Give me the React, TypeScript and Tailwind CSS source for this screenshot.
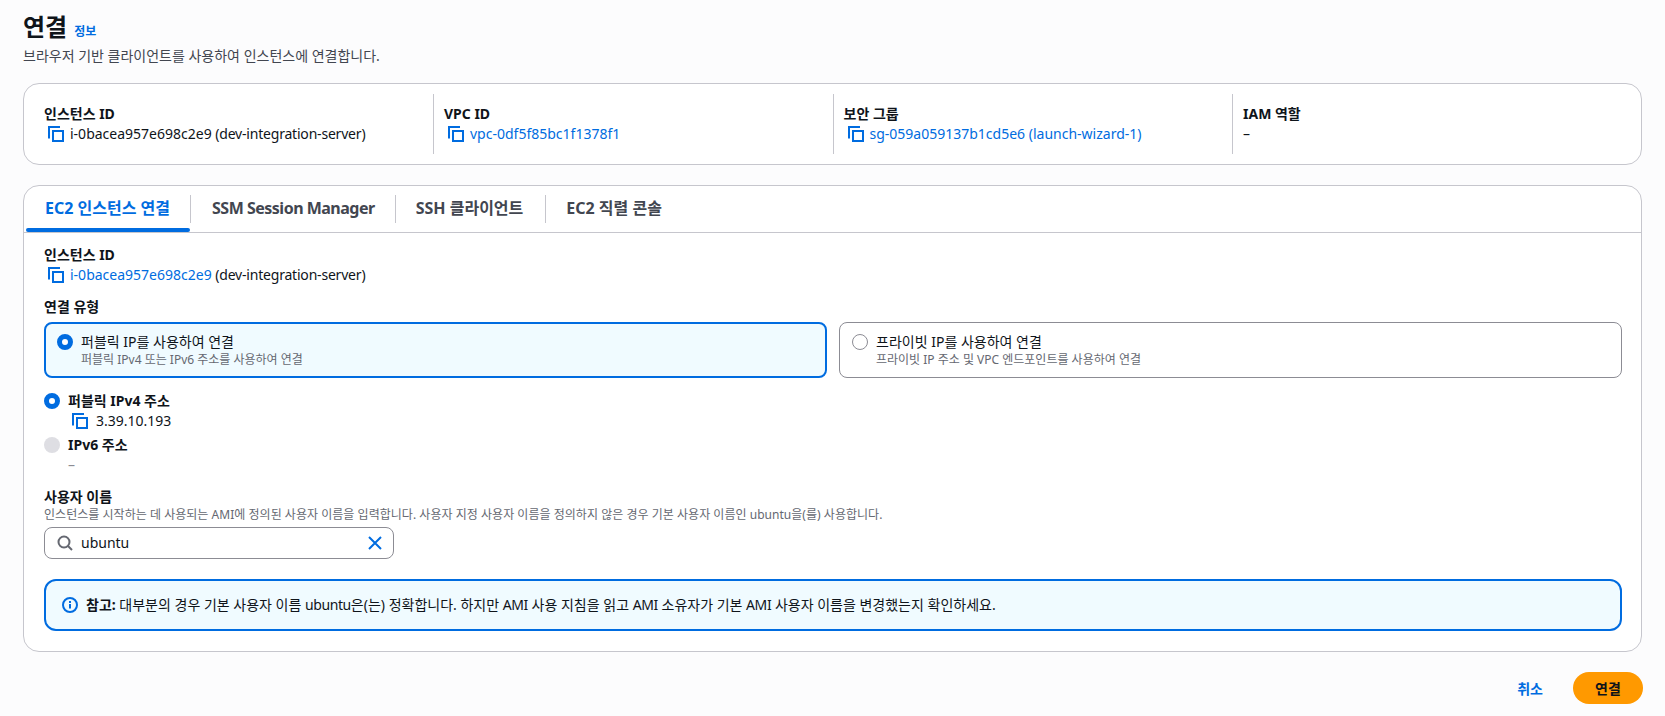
import React from "react";

function CopyIcon() {
  return (
    <svg width="16" height="16" viewBox="0 0 16 16" fill="none" stroke="#006ce0" strokeWidth="2" className="shrink-0">
      <path d="M1 12.5V1h11" />
      <rect x="5" y="5" width="10" height="10" />
    </svg>
  );
}

function Label({ children }: { children: React.ReactNode }) {
  return <div className="text-[14px] leading-[20px] font-bold text-[#0f141a]">{children}</div>;
}

function SummaryColumn({ label, children, divider }: { label: string; children: React.ReactNode; divider?: boolean }) {
  return (
    <div className={divider ? "h-[60px] pt-[10px] pl-[10px] border-l border-[#c6c6cd]" : "h-[60px] pt-[10px]"}>
      <Label>{label}</Label>
      <div className="flex items-center h-[20px]">{children}</div>
    </div>
  );
}

function Value({ id, link, rest, wide }: { id: string; link?: boolean; rest?: string; wide?: boolean }) {
  return (
    <div className={wide ? "flex items-center h-[20px] pl-[4px] gap-[8px] text-[14px] leading-[20px] text-[#0f141a]" : "flex items-center h-[20px] pl-[4px] gap-[6px] text-[14px] leading-[20px] text-[#0f141a]"}>
      <CopyIcon />
      <span>
        <span className={link ? "text-[#006ce0]" : ""}>{id}</span>
        {rest ? " " : ""}
        {rest ? <span className="tracking-[-0.2px]">{rest}</span> : null}
      </span>
    </div>
  );
}

function Tile({ selected, title, desc }: { selected?: boolean; title: string; desc: string }) {
  return (
    <div
      className={
        selected
          ? "flex gap-[8px] h-[56px] pl-[11px] pt-[8px] rounded-[8px] border-2 border-[#006ce0] bg-[#f0fbff]"
          : "flex gap-[8px] h-[56px] pl-[12px] pt-[9px] rounded-[8px] border border-[#8c8c94] bg-white"
      }
    >
      <div className="pt-[2px]">
        {selected ? (
          <div className="size-[16px] rounded-full border-[5px] border-[#006ce0] bg-white" />
        ) : (
          <div className="size-[16px] rounded-full border-[1.5px] border-[#8c8c94] bg-white" />
        )}
      </div>
      <div>
        <div className="text-[14px] leading-[20px] text-[#0f141a]">{title}</div>
        <div className="text-[12px] leading-[16px] text-[#656871]">{desc}</div>
      </div>
    </div>
  );
}

function Tab({ children, active, last, kind }: { children: React.ReactNode; active?: boolean; last?: boolean; kind?: "tight" | "wide" }) {
  return (
    <div className="flex items-center h-[46px]">
      <div
        className={
          active
            ? "relative flex items-center h-[46px] pl-[21px] pr-[20px] pb-[3px] text-[16px] font-bold text-[#006ce0]"
            : kind === "tight"
            ? "flex items-center h-[46px] pl-[21px] pr-[20px] pb-[3px] text-[16px] font-bold text-[#424650] tracking-[-0.5px]"
            : kind === "wide"
            ? "flex items-center h-[46px] pl-[20px] pr-[22px] pb-[3px] text-[16px] font-bold text-[#424650]"
            : "flex items-center h-[46px] px-[20px] pb-[3px] text-[16px] font-bold text-[#424650]"
        }
      >
        {children}
        {active && <div className="absolute left-[2px] right-0 bottom-0 h-[4px] rounded-[2px] bg-[#006ce0]" />}
      </div>
      {!last && <div className="h-[28px] w-px bg-[#c6c6cd]" />}
    </div>
  );
}

function Latin({ children }: { children: React.ReactNode }) {
  return <span className="tracking-[-0.4px]">{children}</span>;
}

export default function App() {
  return (
    <div className="min-h-[716px] bg-[#fcfcfd] pl-[23px] pr-[23px] pt-[12px] text-[#0f141a]">
      <div className="font-['Noto_Sans','Noto_Sans_CJK_KR',sans-serif]">
        <div className="flex items-baseline gap-[7px]">
          <h1 className="text-[24px] leading-[30px] font-bold">연결</h1>
          <span className="text-[12px] font-bold text-[#006ce0]">정보</span>
        </div>
        <p className="text-[14px] leading-[20px] text-[#424650] mt-[4px]">브라우저 기반 클라이언트를 사용하여 인스턴스에 연결합니다.</p>

        <section className="mt-[17px] h-[82px] rounded-[16px] border border-[#c6c6cd] bg-white pl-[20px] pt-[10px] grid grid-cols-[389px_399.5px_399.5px_1fr]">
          <SummaryColumn label="인스턴스 ID">
            <Value id="i-0bacea957e698c2e9" rest="(dev-integration-server)" />
          </SummaryColumn>
          <SummaryColumn label="VPC ID" divider>
            <Value id="vpc-0df5f85bc1f1378f1" link />
          </SummaryColumn>
          <SummaryColumn label="보안 그룹" divider>
            <Value id="sg-059a059137b1cd5e6 (launch-wizard-1)" link />
          </SummaryColumn>
          <SummaryColumn label="IAM 역할" divider>
            <span className="text-[14px] leading-[20px]">–</span>
          </SummaryColumn>
        </section>

        <section className="mt-[20px] h-[467px] rounded-[16px] border border-[#c6c6cd] bg-white">
          <div className="flex border-b border-[#c6c6cd]">
            <Tab active>EC2 인스턴스 연결</Tab>
            <Tab kind="tight">SSM Session Manager</Tab>
            <Tab kind="wide">SSH 클라이언트</Tab>
            <Tab last>EC2 직렬 콘솔</Tab>
          </div>

          <div className="pl-[20px] pr-[19px] pt-[12px]">
            <Label>인스턴스 ID</Label>
            <Value id="i-0bacea957e698c2e9" link rest="(dev-integration-server)" />

            <div className="mt-[12px]">
              <Label>연결 유형</Label>
            </div>
            <div className="grid grid-cols-2 gap-[12px] mt-[5px]">
              <Tile selected title="퍼블릭 IP를 사용하여 연결" desc="퍼블릭 IPv4 또는 IPv6 주소를 사용하여 연결" />
              <Tile title="프라이빗 IP를 사용하여 연결" desc="프라이빗 IP 주소 및 VPC 엔드포인트를 사용하여 연결" />
            </div>

            <div className="mt-[13px] flex items-center gap-[8px] h-[20px]">
              <div className="size-[16px] rounded-full border-[5px] border-[#006ce0] bg-white" />
              <Label>퍼블릭 IPv4 주소</Label>
            </div>
            <div className="pl-[24px]">
              <Value id="3.39.10.193" wide />
            </div>
            <div className="mt-[4px] flex items-center gap-[8px] h-[20px]">
              <div className="size-[16px] rounded-full bg-[#dedee3]" />
              <Label>IPv6 주소</Label>
            </div>
            <div className="pl-[24px] text-[14px] leading-[20px] text-[#8c8c94]">–</div>

            <div className="mt-[12px]">
              <Label>사용자 이름</Label>
            </div>
            <div className="text-[12px] leading-[16px] text-[#656871] tracking-[0.03px]">
              인스턴스를 시작하는 데 사용되는 AMI에 정의된 사용자 이름을 입력합니다. 사용자 지정 사용자 이름을 정의하지 않은 경우 기본 사용자 이름인 ubuntu을(를) 사용합니다.
            </div>
            <div className="mt-[4px] w-[350px] h-[32px] rounded-[8px] border border-[#8c8c94] bg-white flex items-center pl-[12px] pr-[10px]">
              <svg width="16" height="16" viewBox="0 0 16 16" fill="none" stroke="#656871" strokeWidth="2" className="shrink-0">
                <circle cx="7" cy="7" r="5.5" />
                <path d="M11 11l4 4" />
              </svg>
              <span className="ml-[8px] text-[14px] leading-[20px] flex-1">ubuntu</span>
              <svg width="16" height="16" viewBox="0 0 16 16" fill="none" stroke="#006ce0" strokeWidth="2" className="shrink-0">
                <path d="M2 2l12 12M14 2L2 14" />
              </svg>
            </div>

            <div className="mt-[20px] h-[52px] rounded-[12px] border-2 border-[#006ce0] bg-[#f0fbff] flex items-center pl-[16px] gap-[8px] text-[14px] leading-[20px]">
              <svg width="16" height="16" viewBox="0 0 16 16" fill="none" stroke="#006ce0" strokeWidth="2" className="shrink-0">
                <circle cx="8" cy="8" r="7" />
                <path d="M8 7v4.5M8 4v2" />
              </svg>
              <span>
                <b>참고:</b> 대부분의 경우 기본 사용자 이름 <Latin>ubuntu</Latin>은(는) 정확합니다. 하지만 <Latin>AMI</Latin> 사용 지침을 읽고 <Latin>AMI</Latin> 소유자가 기본 <Latin>AMI</Latin> 사용자 이름을 변경했는지 확인하세요.
              </span>
            </div>
          </div>
        </section>

        <div className="flex justify-end items-center gap-[30px] mt-[20px] mr-[-1px]">
          <span className="text-[14px] font-bold text-[#006ce0]">취소</span>
          <button className="w-[70px] h-[32px] rounded-full bg-[#ff9900] text-[14px] font-bold text-[#0f141a]">연결</button>
        </div>
      </div>
    </div>
  );
}
